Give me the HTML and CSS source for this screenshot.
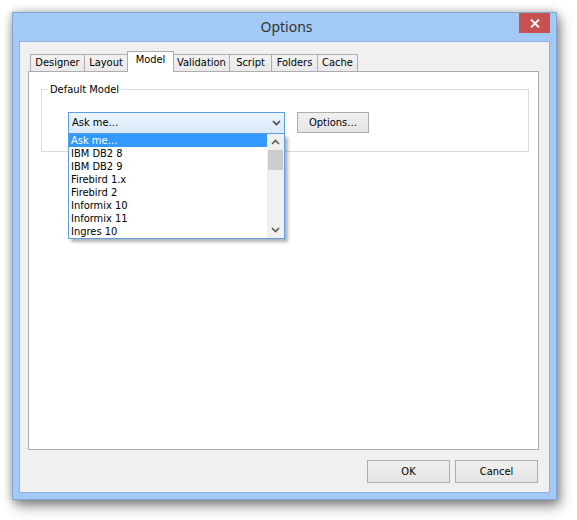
FILE: index.html
```html
<!DOCTYPE html>
<html>
<head>
<meta charset="utf-8">
<title>Options</title>
<link rel="stylesheet" href="styles.css">
</head>
<body>
<div class="window">
  <div class="titlebar">
    <span class="spacer"></span>
    <div class="title">Options</div>
    <div class="close">
      <svg width="10" height="9" viewBox="0 0 10 9"><path d="M1 0.5 L9 8.5 M9 0.5 L1 8.5" stroke="#fff" stroke-width="1.8" fill="none"/></svg>
    </div>
  </div>
  <div class="client">
    <div class="tabs">
      <div class="tab t-designer">Designer</div>
      <div class="tab t-layout">Layout</div>
      <div class="tab t-model selected">Model</div>
      <div class="tab t-validation">Validation</div>
      <div class="tab t-script">Script</div>
      <div class="tab t-folders">Folders</div>
      <div class="tab t-cache">Cache</div>
    </div>
    <div class="panel">
      <div class="group">
        <span class="legend">Default Model</span>
        <div class="row">
          <div class="combo-wrap">
            <div class="combo">
              <span class="combo-text">Ask me…</span>
              <svg class="chev" width="9" height="6" viewBox="0 0 9 6"><polyline points="1,1 4.5,4.5 8,1" stroke="#4a4a4a" stroke-width="1.7" fill="none"/></svg>
            </div>
            <div class="dropdown">
              <ul class="items">
                <li class="sel">Ask me…</li>
                <li>IBM DB2 8</li>
                <li>IBM DB2 9</li>
                <li>Firebird 1.x</li>
                <li>Firebird 2</li>
                <li>Informix 10</li>
                <li>Informix 11</li>
                <li>Ingres 10</li>
              </ul>
              <div class="scrollbar">
                <div class="sb-btn">
                  <svg width="9" height="6" viewBox="0 0 9 6"><polyline points="1,5 4.5,1.5 8,5" stroke="#606060" stroke-width="1.7" fill="none"/></svg>
                </div>
                <div class="sb-track"><div class="sb-thumb"></div></div>
                <div class="sb-btn">
                  <svg width="9" height="6" viewBox="0 0 9 6"><polyline points="1,1 4.5,4.5 8,1" stroke="#606060" stroke-width="1.7" fill="none"/></svg>
                </div>
              </div>
            </div>
          </div>
          <button class="btn btn-options">Options…</button>
        </div>
      </div>
    </div>
    <div class="buttons">
      <button class="btn btn-dialog">OK</button>
      <button class="btn btn-dialog">Cancel</button>
    </div>
  </div>
</div>
</body>
</html>
```

FILE: styles.css
```css
html, body {
  margin: 0;
  padding: 0;
  background: #ffffff;
}

body {
  width: 577px;
  height: 520px;
  overflow: hidden;
  font-family: "DejaVu Sans Condensed", "Liberation Sans", sans-serif;
  font-size: 11px;
  color: #000;
}

.window {
  margin: 12px 0 0 12px;
  width: 545px;
  height: 488px;
  box-sizing: border-box;
  border: 1px solid #86a6cf;
  background: #a3caf4;
  padding: 0 6px 6px 6px;
  display: flex;
  flex-direction: column;
  box-shadow: 0 0 8px rgba(0, 0, 0, 0.25), 3px 6px 12px rgba(0, 0, 0, 0.45);
}

.titlebar {
  height: 28px;
  display: grid;
  grid-template-columns: 1fr auto 1fr;
  align-items: start;
}

.title {
  font-family: "Noto Sans", "Open Sans", sans-serif;
  font-size: 14px;
  color: #333333;
  line-height: 28px;
  margin-left: 4px;
}

.close {
  justify-self: end;
  width: 31px;
  height: 20px;
  background: #c75050;
  display: flex;
  align-items: center;
  justify-content: center;
}

.client {
  flex: 1;
  background: #f0f0f0;
  border: 1px solid #8db2df;
  padding: 9px 11px 9px 8px;
  display: flex;
  flex-direction: column;
}

.tabs {
  display: flex;
  align-items: flex-end;
  height: 20px;
  margin-left: 2px;
}

.tab {
  box-sizing: border-box;
  height: 17px;
  border: 1px solid #adadad;
  border-bottom: none;
  background: linear-gradient(#f2f2f2, #e9e9e9);
  line-height: 16px;
  text-align: center;
  margin-left: -1px;
  white-space: nowrap;
}

.tab.t-designer { width: 55px; margin-left: 0; }
.tab.t-layout { width: 44px; }
.tab.t-model { width: 47px; }
.tab.t-validation { width: 57px; }
.tab.t-script { width: 43px; }
.tab.t-folders { width: 47px; }
.tab.t-cache { width: 41px; }

.tab.selected {
  height: 21px;
  background: #ffffff;
  margin-bottom: -1px;
  position: relative;
  z-index: 1;
  line-height: 16px;
}

.panel {
  width: 511px;
  height: 379px;
  box-sizing: border-box;
  background: #ffffff;
  border: 1px solid #adadad;
  padding: 17px 9px 0 12px;
}

.group {
  height: 63px;
  box-sizing: border-box;
  border: 1px solid #dcdcdc;
  display: flex;
  flex-direction: column;
  align-items: flex-start;
}

.legend {
  display: inline-block;
  margin: -7px 0 0 6px;
  padding: 0 2px;
  line-height: 13px;
  background: #ffffff;
}

.row {
  display: flex;
  align-items: flex-start;
  margin: 16px 0 0 26px;
}

.combo-wrap {
  position: relative;
  width: 217px;
}

.combo {
  box-sizing: border-box;
  height: 22px;
  border: 1px solid #5a9fe4;
  background: linear-gradient(#ecf4fc, #d8e9f9);
  display: flex;
  align-items: center;
  justify-content: space-between;
  padding: 0 3px 0 3px;
}

.combo-text {
  line-height: 14px;
}

.chev {
  display: block;
}

.dropdown {
  position: absolute;
  top: 22px;
  left: 0;
  width: 217px;
  box-sizing: border-box;
  border: 1px solid #5a9fe4;
  border-top: none;
  background: #ffffff;
  display: flex;
  box-shadow: 3px 3px 3px rgba(0, 0, 0, 0.3);
  z-index: 5;
}

.items {
  list-style: none;
  margin: 0;
  padding: 0;
  flex: 1;
}

.items li {
  height: 13px;
  line-height: 13px;
  padding-left: 2px;
  white-space: nowrap;
}

.items li.sel {
  background: #3399ff;
  color: #ffffff;
}

.scrollbar {
  width: 17px;
  background: #f0f0f0;
  display: flex;
  flex-direction: column;
}

.sb-btn {
  height: 16px;
  display: flex;
  align-items: center;
  justify-content: center;
}

.sb-track {
  flex: 1;
  padding: 0 1px;
}

.sb-thumb {
  height: 20px;
  background: #cdcdcd;
}

.btn {
  font: inherit;
  color: #000;
  box-sizing: border-box;
  border: 1px solid #acacac;
  background: linear-gradient(#f0f0f0, #e5e5e5);
  padding: 0;
  margin: 0;
  text-align: center;
}

.btn-options {
  width: 72px;
  height: 21px;
  margin-left: 12px;
}

.buttons {
  display: flex;
  justify-content: flex-end;
  gap: 5px;
  margin-top: 10px;
}

.btn-dialog {
  width: 83px;
  height: 23px;
}
```
